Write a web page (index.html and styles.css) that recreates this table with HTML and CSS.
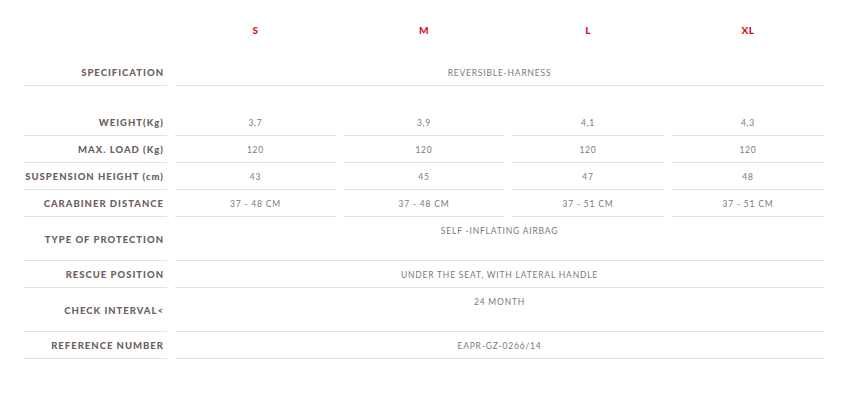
FILE: index.html
```html
<!DOCTYPE html>
<html>
<head>
<meta charset="utf-8">
<link rel="stylesheet" href="styles.css">
</head>
<body>
<div class="specs">
  <div class="row head">
    <div class="cell label"></div>
    <div class="cell size">S</div>
    <div class="cell size">M</div>
    <div class="cell size">L</div>
    <div class="cell size">XL</div>
  </div>
  <div class="row">
    <div class="cell label">SPECIFICATION</div>
    <div class="cell val span">REVERSIBLE-HARNESS</div>
  </div>
  <div class="spacer"></div>
  <div class="row">
    <div class="cell label">WEIGHT(Kg)</div>
    <div class="cell val">3,7</div>
    <div class="cell val">3,9</div>
    <div class="cell val">4,1</div>
    <div class="cell val">4,3</div>
  </div>
  <div class="row">
    <div class="cell label">MAX. LOAD (Kg)</div>
    <div class="cell val">120</div>
    <div class="cell val">120</div>
    <div class="cell val">120</div>
    <div class="cell val">120</div>
  </div>
  <div class="row">
    <div class="cell label">SUSPENSION HEIGHT (cm)</div>
    <div class="cell val">43</div>
    <div class="cell val">45</div>
    <div class="cell val">47</div>
    <div class="cell val">48</div>
  </div>
  <div class="row">
    <div class="cell label">CARABINER DISTANCE</div>
    <div class="cell val">37 - 48 CM</div>
    <div class="cell val">37 - 48 CM</div>
    <div class="cell val">37 - 51 CM</div>
    <div class="cell val">37 - 51 CM</div>
  </div>
  <div class="row tall">
    <div class="cell label">TYPE OF PROTECTION</div>
    <div class="cell val span">SELF -INFLATING AIRBAG</div>
  </div>
  <div class="row">
    <div class="cell label">RESCUE POSITION</div>
    <div class="cell val span">UNDER THE SEAT, WITH LATERAL HANDLE</div>
  </div>
  <div class="row tall">
    <div class="cell label">CHECK INTERVAL&lt;</div>
    <div class="cell val span">24 MONTH</div>
  </div>
  <div class="row">
    <div class="cell label">REFERENCE NUMBER</div>
    <div class="cell val span">EAPR-GZ-0266/14</div>
  </div>
</div>
</body>
</html>
```

FILE: styles.css
```css
html, body {
  margin: 0;
  padding: 0;
  background: #ffffff;
}

body {
  font-family: "Lato", "Open Sans", sans-serif;
}

.specs {
  padding-left: 24px;
  width: 801px;
}

.row {
  display: grid;
  grid-template-columns: 143px 161px 160px 152px 152px;
  column-gap: 8px;
}

.cell {
  border-bottom: 1px solid #e3e0de;
  padding: 7px 0 5px;
  line-height: 14px;
  min-height: 14px;
  white-space: nowrap;
}

.head .cell {
  border-bottom: none;
  padding: 23px 0 22px;
}

.label {
  text-align: right;
  padding-right: 3px;
  font-size: 9.5px;
  font-weight: 900;
  letter-spacing: 1px;
  color: #6c605c;
  display: flex;
  align-items: center;
  justify-content: flex-end;
}

.size {
  text-align: center;
  color: #d8101f;
  font-weight: 900;
  font-size: 10px;
  letter-spacing: 0.5px;
}

.val {
  text-align: center;
  font-size: 8.5px;
  letter-spacing: 0.8px;
  color: #7f7876;
}

.span {
  grid-column: 2 / -1;
}

.tall .cell {
  min-height: 31px;
}

.spacer {
  height: 23px;
}
```
